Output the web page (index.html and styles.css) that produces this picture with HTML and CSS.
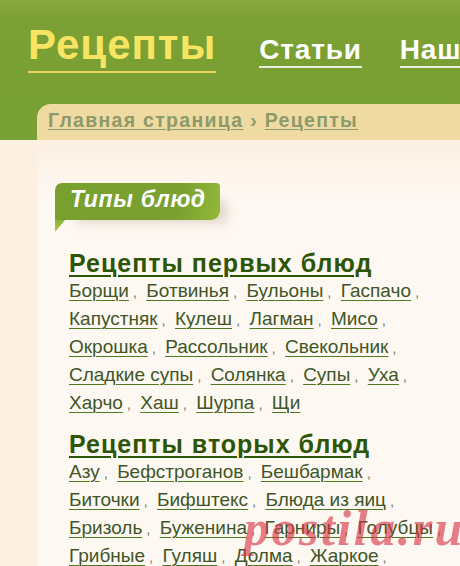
FILE: index.html
```html
<!DOCTYPE html>
<html lang="ru">
<head>
<meta charset="utf-8">
<title>Рецепты</title>
<link rel="stylesheet" href="styles.css">
</head>
<body>
<header class="top">
  <nav class="nav">
    <a class="brand" href="#">Рецепты</a>
    <a class="nav-link" href="#">Статьи</a>
    <a class="nav-link" href="#">Наши</a>
  </nav>
</header>
<div class="crumbs-row">
  <div class="crumbs">
    <a href="#">Главная страница</a> <span class="arrow">›</span> <a href="#">Рецепты</a>
  </div>
</div>
<div class="page">
  <div class="side"></div>
  <main class="content">
    <div class="tab"><span>Типы блюд</span></div>
    <section class="group">
      <h2><a href="#">Рецепты первых блюд</a></h2>
      <p class="links">
        <a href="#">Борщи</a><span class="sep">,</span>
        <a href="#">Ботвинья</a><span class="sep">,</span>
        <a href="#">Бульоны</a><span class="sep">,</span>
        <a href="#">Гаспачо</a><span class="sep">,</span>
        <a href="#">Капустняк</a><span class="sep">,</span>
        <a href="#">Кулеш</a><span class="sep">,</span>
        <a href="#">Лагман</a><span class="sep">,</span>
        <a href="#">Мисо</a><span class="sep">,</span>
        <a href="#">Окрошка</a><span class="sep">,</span>
        <a href="#">Рассольник</a><span class="sep">,</span>
        <a href="#">Свекольник</a><span class="sep">,</span>
        <a href="#">Сладкие супы</a><span class="sep">,</span>
        <a href="#">Солянка</a><span class="sep">,</span>
        <a href="#">Супы</a><span class="sep">,</span>
        <a href="#">Уха</a><span class="sep">,</span>
        <a href="#">Харчо</a><span class="sep">,</span>
        <a href="#">Хаш</a><span class="sep">,</span>
        <a href="#">Шурпа</a><span class="sep">,</span>
        <a href="#">Щи</a>
      </p>
    </section>
    <section class="group">
      <h2><a href="#">Рецепты вторых блюд</a></h2>
      <p class="links">
        <a href="#">Азу</a><span class="sep">,</span>
        <a href="#">Бефстроганов</a><span class="sep">,</span>
        <a href="#">Бешбармак</a><span class="sep">,</span>
        <a href="#">Биточки</a><span class="sep">,</span>
        <a href="#">Бифштекс</a><span class="sep">,</span>
        <a href="#">Блюда из яиц</a><span class="sep">,</span>
        <a href="#">Бризоль</a><span class="sep">,</span>
        <a href="#">Буженина</a><span class="sep">,</span>
        <a href="#">Гарниры</a><span class="sep">,</span>
        <a href="#">Голубцы</a><span class="sep">,</span>
        <a href="#">Грибные</a><span class="sep">,</span>
        <a href="#">Гуляш</a><span class="sep">,</span>
        <a href="#">Долма</a><span class="sep">,</span>
        <a href="#">Жаркое</a><span class="sep">,</span>
        <a href="#">Зразы</a><span class="sep">,</span>
        <a href="#">Каши</a>
      </p>
    </section>
  </main>
</div>
<div class="watermark">postila.ru</div>
</body>
</html>
```
FILE: styles.css
```css
html, body {
  margin: 0;
  padding: 0;
}
body {
  width: 460px;
  height: 566px;
  overflow: hidden;
  position: relative;
  font-family: "Liberation Sans", Arial, sans-serif;
  background: #fdf0e3;
}
.top {
  height: 104px;
  background: linear-gradient(#87a83c 0, #7ba034 20px, #79a034 100%);
  overflow: hidden;
}
.nav {
  display: flex;
  align-items: baseline;
  white-space: nowrap;
  padding: 22px 0 0 28px;
}
.brand {
  font-size: 42px;
  font-weight: bold;
  letter-spacing: 1px;
  color: #f7e463;
  text-decoration: none;
  border-bottom: 2px solid #e8d45a;
  padding-bottom: 3px;
  line-height: 46px;
  margin-right: 43px;
}
.nav-link {
  font-size: 28px;
  font-weight: bold;
  letter-spacing: 0.8px;
  color: #ffffff;
  text-decoration: none;
  border-bottom: 2px solid #e8efe0;
  padding-bottom: 1px;
  line-height: 30px;
  margin-right: 38px;
}
.crumbs-row {
  background: #79a034;
  padding-left: 37px;
}
.crumbs {
  height: 36px;
  background: #efdba1;
  border-top-left-radius: 14px;
  padding: 5px 0 0 11px;
  box-sizing: border-box;
  font-size: 19.5px;
  font-weight: bold;
  letter-spacing: 1.3px;
  color: #8c9a6c;
  white-space: nowrap;
}
.crumbs a {
  color: #8c9a6c;
  text-decoration: underline;
  text-decoration-thickness: 1px;
  text-underline-offset: 2px;
}
.page {
  display: flex;
}
.side {
  width: 37px;
  flex: none;
  background: #fdf0e3;
}
.content {
  flex: 1;
  background: linear-gradient(#fdf0e3 0, #fef8f2 60px, #fef8f2 100%);
  padding: 43px 0 0 18px;
  min-height: 430px;
}
.tab {
  position: relative;
  display: inline-block;
  height: 37px;
  width: 165px;
  box-sizing: border-box;
  padding: 3px 0 0 15px;
  background: linear-gradient(100deg, #78a02e 0, #7aa130 75%, #93b83a 100%);
  border-radius: 7px 4px 9px 0;
  box-shadow: 14px 10px 12px -8px rgba(120, 90, 60, 0.25);
  font-size: 23px;
  font-weight: bold;
  font-style: italic;
  letter-spacing: 0.7px;
  color: #ffffff;
  margin-bottom: 29px;
}
.tab::after {
  content: "";
  position: absolute;
  left: 0;
  top: 37px;
  width: 10px;
  height: 12px;
  background: linear-gradient(#8bb036, #b3cc52);
  clip-path: polygon(0 0, 100% 0, 0 100%);
}
.group {
  padding-left: 14px;
  margin-bottom: 13px;
}
.group h2 {
  margin: 0;
  font-size: 25px;
  line-height: 28px;
  font-weight: bold;
  letter-spacing: 1px;
}
.group h2 a {
  color: #2d5506;
  text-decoration: underline;
  text-decoration-thickness: 2px;
  text-underline-offset: 3px;
}
.links {
  margin: 0;
  font-size: 19px;
  line-height: 27px;
  width: 382px;
  color: #6d7560;
}
.links a {
  color: #405628;
  text-decoration: underline;
  text-decoration-color: #4d7a20;
  text-decoration-thickness: 1px;
  text-underline-offset: 3px;
}
.sep {
  font-size: 15px;
  margin-left: 4px;
  margin-right: 4px;
  color: #7a7f70;
}
.watermark {
  position: absolute;
  left: 244px;
  top: 503px;
  line-height: 1;
  font-family: "Liberation Serif", "Times New Roman", serif;
  font-size: 50px;
  font-weight: bold;
  font-style: italic;
  letter-spacing: 2.5px;
  color: rgba(214, 50, 66, 0.62);
  pointer-events: none;
}
```
